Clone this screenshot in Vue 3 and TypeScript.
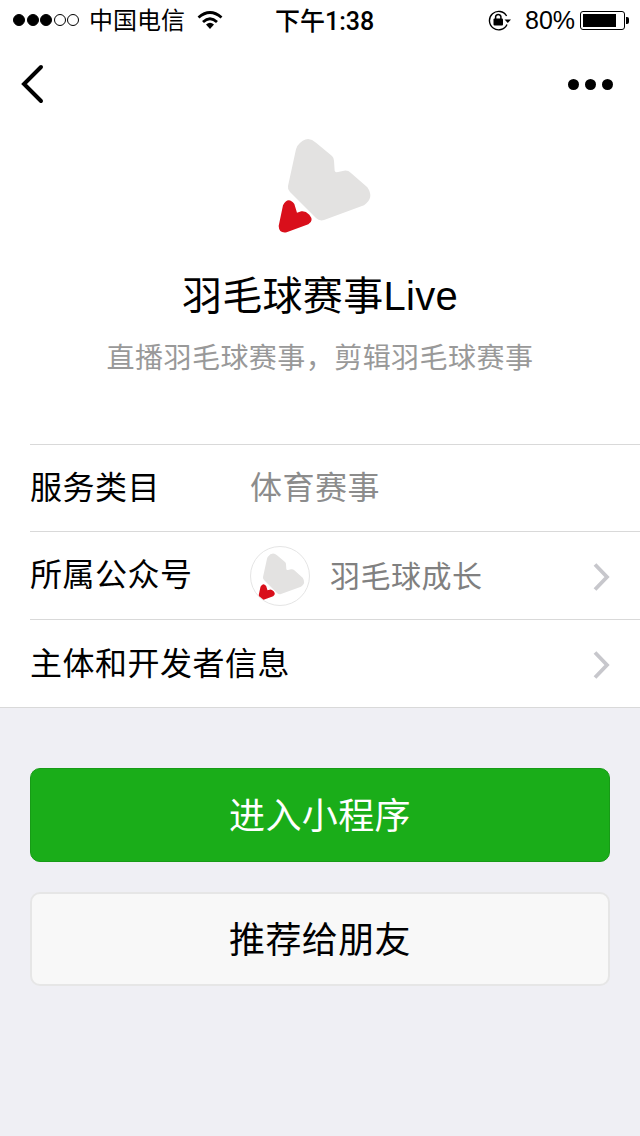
<script setup lang="ts">
const grayPath = 'M112 66 Q140 30 168 56 L216 96 Q222 102 222 110 L224 140 Q226 146 234 144 L252 140 Q264 138 272 146 L322 190 Q344 222 312 244 L192 288 Q178 292 168 282 L90 204 Q82 196 84 186 L108 76 Z'
const redPath = 'M69 244 Q84 216 103 240 L111 266 L124 262 Q136 260 148 272 Q163 290 145 301 L80 325 Q57 329 56 306 Z'
const signal = [true, true, true, false, false]
</script>

<template>
  <div class="page">
    <div class="status">
      <div class="signal">
        <span v-for="(on, i) in signal" :key="i" class="dot" :class="{ on }"></span>
      </div>
      <span class="carrier">中国电信</span>
      <svg class="wifi" width="26" height="20" viewBox="0 0 26 20">
        <path d="M1.5 7.5 Q13 -2.5 24.5 7.5" fill="none" stroke="#000" stroke-width="2.8" />
        <path d="M6 12 Q13 5.5 20 12" fill="none" stroke="#000" stroke-width="2.8" />
        <path d="M9 14.5 Q13 11 17 14.5 L13 19 Z" fill="#000" />
      </svg>
      <span class="time">下午1:38</span>
      <svg class="lock" width="24" height="22" viewBox="0 0 24 22">
        <path d="M19 15.5 A9.2 9.2 0 1 1 18.6 7" fill="none" stroke="#000" stroke-width="1.4" />
        <path d="M16.5 10.5 H23 L19.8 14 Z" fill="#000" />
        <rect x="5.5" y="9.5" width="9.5" height="7" rx="1" fill="#000" />
        <path d="M7.6 10 V7.6 A2.7 2.7 0 0 1 12.9 7.6 V10" fill="none" stroke="#000" stroke-width="1.5" />
      </svg>
      <span class="battery-text">80%</span>
      <div class="battery">
        <div class="battery-fill"></div>
      </div>
      <div class="battery-nub"></div>
    </div>

    <div class="nav">
      <svg width="24" height="40" viewBox="0 0 24 40">
        <path d="M20 3 L3 20 L20 37" fill="none" stroke="#000" stroke-width="4" stroke-linecap="round" stroke-linejoin="miter" />
      </svg>
      <div class="more">
        <span></span><span></span><span></span>
      </div>
    </div>

    <div class="header">
      <svg class="logo" width="130" height="120" viewBox="0 0 390 360">
        <path :d="grayPath" fill="#e3e2e1" />
        <path :d="redPath" fill="#d90f1b" />
      </svg>
      <h1 class="title">羽毛球赛事Live</h1>
      <p class="desc">直播羽毛球赛事，剪辑羽毛球赛事</p>
    </div>

    <div class="list">
      <div class="row first">
        <span class="label">服务类目</span>
        <span class="value">体育赛事</span>
      </div>
      <div class="row">
        <span class="label">所属公众号</span>
        <div class="avatar">
          <svg width="60" height="60" viewBox="6 0 360 360">
            <path :d="grayPath" fill="#e3e2e1" />
            <path :d="redPath" fill="#d90f1b" />
          </svg>
        </div>
        <span class="account">羽毛球成长</span>
        <svg class="arrow" width="18" height="30" viewBox="0 0 18 30">
          <path d="M3 2.5 L15 15 L3 27.5" fill="none" stroke="#c7c7cc" stroke-width="3.8" />
        </svg>
      </div>
      <div class="row">
        <span class="label wide">主体和开发者信息</span>
        <svg class="arrow" width="18" height="30" viewBox="0 0 18 30">
          <path d="M3 2.5 L15 15 L3 27.5" fill="none" stroke="#c7c7cc" stroke-width="3.8" />
        </svg>
      </div>
    </div>

    <div class="actions">
      <button type="button" class="btn primary">进入小程序</button>
      <button type="button" class="btn plain">推荐给朋友</button>
    </div>
  </div>
</template>

<style scoped>
.page {
  min-height: 1136px;
  background: #efeff4;
  color: #000;
  font-family: "Liberation Sans", "Noto Sans CJK SC", sans-serif;
}

.status {
  height: 40px;
  background: #fff;
  display: flex;
  align-items: center;
  padding-left: 13px;
  font-size: 24px;
}

.signal {
  display: flex;
  gap: 1.5px;
  width: 68px;
}

.dot {
  width: 12px;
  height: 12px;
  box-sizing: border-box;
  border: 1px solid #000;
  border-radius: 50%;
}

.dot.on {
  background: #000;
}

.carrier {
  margin: 0 0 3px 8px;
  width: 96px;
}

.wifi {
  margin: 0 0 1px 12px;
}

.time {
  margin: 0 0 2px 52px;
  width: 98px;
  font-family: Roboto, "Noto Sans CJK SC", sans-serif;
  font-size: 25px;
  font-weight: 500;
  white-space: nowrap;
}

.lock {
  margin-left: 115px;
}

.battery-text {
  margin-left: 13px;
  width: 49px;
  font-size: 25px;
}

.battery {
  margin-left: 6px;
  width: 45px;
  height: 19px;
  box-sizing: border-box;
  border: 1px solid #000;
  border-radius: 3px;
  padding: 2px;
}

.battery-fill {
  width: 33px;
  height: 100%;
  background: #000;
}

.battery-nub {
  width: 3px;
  height: 7px;
  margin-left: 1px;
  background: #000;
  border-radius: 0 2px 2px 0;
}

.nav {
  height: 85px;
  background: #fff;
  display: flex;
  align-items: center;
  justify-content: space-between;
  padding: 0 27px 0 21px;
  box-sizing: border-box;
}

.nav svg {
  margin-top: 2px;
}

.more {
  display: flex;
  gap: 6px;
  margin-top: 3px;
}

.more span {
  width: 11px;
  height: 11px;
  border-radius: 50%;
  background: #000;
}

.header {
  height: 319px;
  background: #fff;
  display: flex;
  flex-direction: column;
  align-items: center;
}

.logo {
  margin: -1px 0 1px 10px;
  flex: none;
}

.title {
  margin: 23px 0 0;
  font-size: 40px;
  font-weight: 400;
  line-height: 56px;
  letter-spacing: 0.3px;
}

.desc {
  margin: 15px 0 0;
  font-size: 28px;
  line-height: 40px;
  letter-spacing: 0.45px;
  color: #999;
}

.list {
  background: #fff;
  padding-left: 30px;
  border-bottom: 1px solid #d9d9d9;
}

.row {
  height: 88px;
  box-sizing: border-box;
  border-top: 1px solid #d9d9d9;
  display: flex;
  align-items: center;
  padding-right: 30px;
}

.row.first {
  height: 87px;
}

.label {
  width: 220px;
  flex: none;
  margin-bottom: 7px;
  font-size: 32px;
  letter-spacing: 0.5px;
}

.label.wide {
  width: auto;
  margin-bottom: 6px;
}

.value {
  margin-bottom: 7px;
  font-size: 32px;
  letter-spacing: 0.5px;
  color: #8c8c8c;
}

.avatar {
  width: 60px;
  height: 60px;
  flex: none;
  box-sizing: border-box;
  border: 1px solid #e5e5e5;
  border-radius: 50%;
  overflow: hidden;
  background: #fff;
}

.avatar svg {
  display: block;
  margin: -1px;
}

.account {
  margin: 0 0 4px 20px;
  font-size: 30px;
  letter-spacing: 0.5px;
  color: #808080;
}

.arrow {
  margin: 2px 0 0 auto;
  flex: none;
}

.actions {
  padding: 60px 30px 0;
  display: flex;
  flex-direction: column;
  gap: 30px;
}

.btn {
  height: 94px;
  box-sizing: border-box;
  border-radius: 10px;
  font-family: inherit;
  font-size: 36px;
  letter-spacing: 0.4px;
  padding: 0 0 4px;
}

.primary {
  background: #1aad19;
  border: 1px solid #179b16;
  color: #fff;
}

.plain {
  background: #f8f8f8;
  border: 2px solid #e6e6e6;
  color: #000;
}
</style>
